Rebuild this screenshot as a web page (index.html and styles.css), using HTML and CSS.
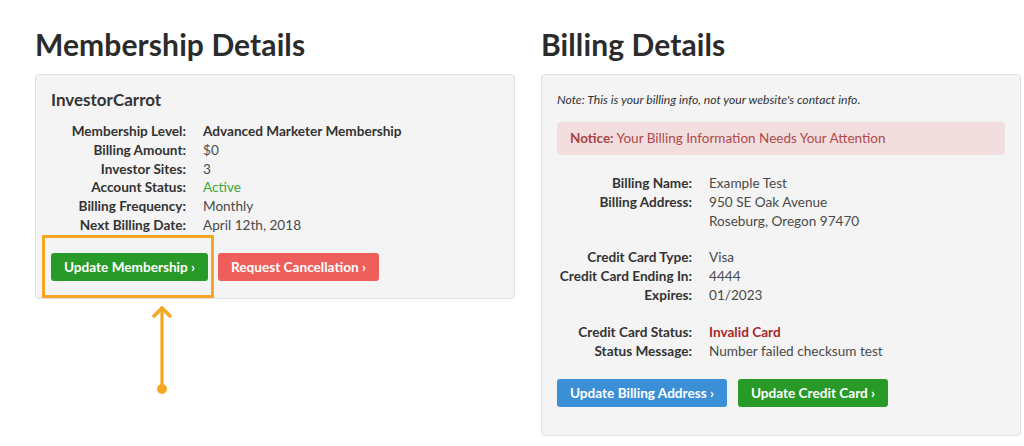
FILE: index.html
```html
<!DOCTYPE html>
<html>
<head>
<meta charset="utf-8">
<link rel="stylesheet" href="styles.css">
</head>
<body>
<div class="page">
  <section class="col col-left">
    <h1 class="title">Membership Details</h1>
    <div class="card card-member">
      <h2 class="brand">InvestorCarrot</h2>
      <div class="rows">
        <div class="label">Membership Level:</div><div class="value strong">Advanced Marketer Membership</div>
        <div class="label">Billing Amount:</div><div class="value">$0</div>
        <div class="label">Investor Sites:</div><div class="value">3</div>
        <div class="label">Account Status:</div><div class="value active">Active</div>
        <div class="label">Billing Frequency:</div><div class="value">Monthly</div>
        <div class="label">Next Billing Date:</div><div class="value">April 12th, 2018</div>
      </div>
      <div class="actions">
        <a class="btn btn-green">Update Membership ›</a>
        <a class="btn btn-red">Request Cancellation ›</a>
      </div>
      <div class="highlight"></div>
    </div>
    <svg class="arrow" width="24" height="94" viewBox="0 0 24 94">
      <path d="M12 4 L12 85" stroke="#f5a623" stroke-width="3.2" stroke-linecap="round" fill="none"/>
      <path d="M4 12 L12 4 L20 12" stroke="#f5a623" stroke-width="3.6" stroke-linecap="round" stroke-linejoin="round" fill="none"/>
      <circle cx="12" cy="85" r="5" fill="#f5a623"/>
    </svg>
  </section>
  <section class="col col-right">
    <h1 class="title">Billing Details</h1>
    <div class="card card-billing">
      <p class="note">Note: This is your billing info, not your website's contact info.</p>
      <div class="notice"><b>Notice:</b> Your Billing Information Needs Your Attention</div>
      <div class="rows group">
        <div class="label">Billing Name:</div><div class="value">Example Test</div>
        <div class="label">Billing Address:</div><div class="value">950 SE Oak Avenue<br>Roseburg, Oregon 97470</div>
      </div>
      <div class="rows group">
        <div class="label">Credit Card Type:</div><div class="value">Visa</div>
        <div class="label">Credit Card Ending In:</div><div class="value">4444</div>
        <div class="label">Expires:</div><div class="value">01/2023</div>
      </div>
      <div class="rows group">
        <div class="label">Credit Card Status:</div><div class="value invalid">Invalid Card</div>
        <div class="label">Status Message:</div><div class="value">Number failed checksum test</div>
      </div>
      <div class="actions">
        <a class="btn btn-blue">Update Billing Address ›</a>
        <a class="btn btn-green">Update Credit Card ›</a>
      </div>
    </div>
  </section>
</div>
</body>
</html>
```

FILE: styles.css
```css
* { box-sizing: border-box; }
html, body { margin: 0; padding: 0; background: #fff; }
body {
  font-family: "Lato", "Liberation Sans", sans-serif;
  color: #333;
  width: 1024px;
  height: 446px;
  overflow: hidden;
}
.page {
  display: flex;
  gap: 26px;
  padding: 0 0 0 35px;
}
.col { position: relative; }
.col-left { width: 480px; }
.col-right { width: 480px; }
.title {
  margin: 0;
  padding-top: 27px;
  height: 74px;
  font-size: 30px;
  line-height: 34px;
  font-weight: 700;
  color: #2b2b2b;
  letter-spacing: 0.1px;
}
.card {
  position: relative;
  background: #f4f4f4;
  border: 1px solid #e2e2e2;
  border-radius: 4px;
  padding: 0 15px;
}
.card-member { padding-top: 14px; padding-bottom: 17px; }
.card-billing { padding-top: 18px; padding-bottom: 28px; }
.brand {
  margin: 0 0 11px;
  font-size: 17px;
  line-height: 22px;
  font-weight: 700;
  color: #333;
}
.rows {
  display: grid;
  grid-template-columns: 135px 1fr;
  column-gap: 17px;
  font-size: 13.6px;
  line-height: 18.8px;
}
.label { text-align: right; font-weight: 700; color: #333; white-space: nowrap; }
.value { color: #4a4a4a; }
.value.strong { font-weight: 700; color: #333; }
.value.active { color: #3aa83a; }
.value.invalid { color: #a8282c; font-weight: 700; }
.actions {
  display: flex;
  gap: 10px;
  margin-top: 18px;
}
.btn {
  display: inline-block;
  height: 28px;
  line-height: 28px;
  padding: 0 13px;
  border-radius: 3px;
  color: #fff;
  font-size: 13.6px;
  font-weight: 700;
  white-space: nowrap;
}
.btn-green { background: #289a28; }
.btn-red { background: #ee5f5c; }
.btn-blue { background: #3b8fd6; }
.highlight {
  position: absolute;
  left: 6px;
  top: 160px;
  width: 172px;
  height: 63px;
  border: 3px solid #f6a623;
}
.arrow {
  position: absolute;
  left: 115px;
  top: 304px;
}
.note {
  margin: 0 0 15px;
  font-size: 12.2px;
  line-height: 14px;
  font-style: italic;
  color: #333;
}
.notice {
  background: #f2dede;
  border-radius: 4px;
  height: 33px;
  line-height: 33px;
  padding: 0 13px;
  color: #b0494b;
  font-size: 13.5px;
  margin-bottom: 19px;
}
.notice b { color: #a94442; }
.group + .group { margin-top: 18px; }
.card-billing .actions { margin-top: 19px; gap: 11px; }
```
